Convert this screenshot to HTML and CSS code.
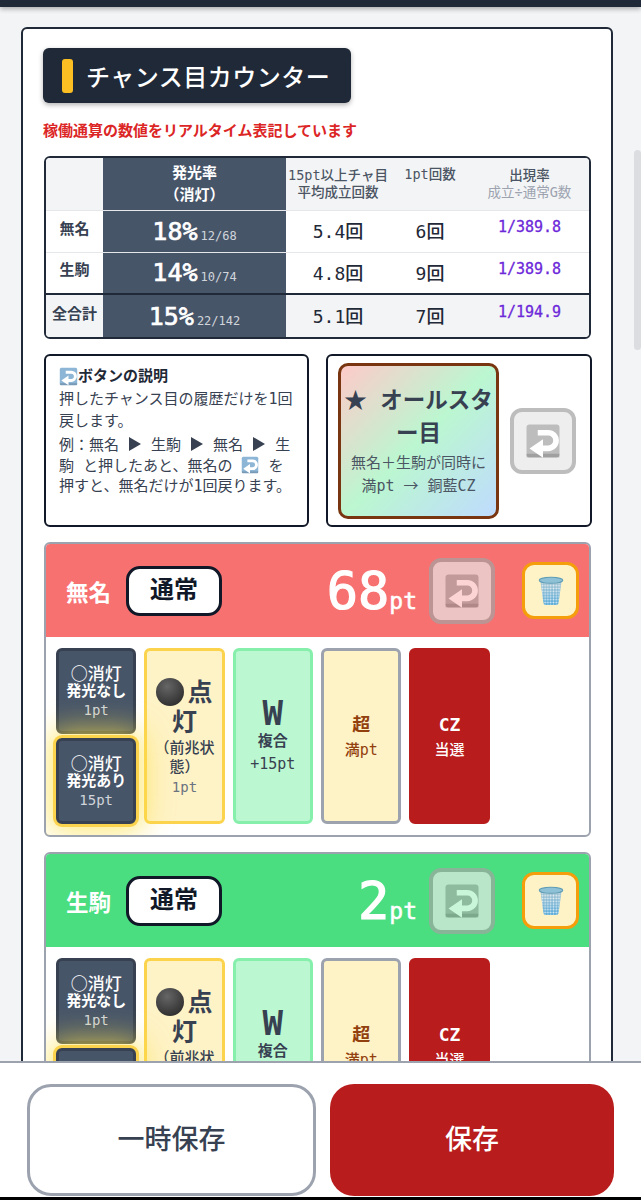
FILE: index.html
```html
<!DOCTYPE html>
<html lang="ja">

<head>
    <meta charset="UTF-8">
    <meta name="viewport" content="width=device-width, initial-scale=1.0">
    <title>チャンス目カウンター</title>
    <link rel="stylesheet" href="styles.css">
</head>

<body>
    <!-- icons used more than once -->
    <svg class="defs" width="0" height="0">
        <defs>
            <symbol id="icon-return" viewBox="0 0 24 24">
                <rect x="1" y="1" width="22" height="22" rx="2" fill="currentColor"/>
                <rect x="1" y="20.5" width="22" height="2.5" fill="#000" opacity=".15"/>
                <path d="M8.500 6.500h7a5.200 5.200 0 0 1 0 10.400H11" fill="none" stroke="#fff" stroke-width="3.800"/>
                <path d="M12 10.800v12.400l-9-6.200z" fill="#fff"/>
            </symbol>
            <pattern id="mesh" width="2.600" height="2.600" patternUnits="userSpaceOnUse">
                <circle cx="1.300" cy="1.300" r=".85" fill="#fff"/>
            </pattern>
            <linearGradient id="basket" x1="0" y1="0" x2="0" y2="1">
                <stop offset="0" stop-color="#a9c4cf"/>
                <stop offset="1" stop-color="#4fa6d6"/>
            </linearGradient>
            <symbol id="icon-trash" viewBox="0 0 24 28">
                <path d="M2 4l3 21.500a2 2 0 0 0 2 1.500h10a2 2 0 0 0 2-1.500L22 4z" fill="url(#basket)"/>
                <path d="M2 4l3 21.500a2 2 0 0 0 2 1.500h10a2 2 0 0 0 2-1.500L22 4z" fill="url(#mesh)" opacity=".8"/>
                <ellipse cx="12" cy="4" rx="11" ry="2.800" fill="#8fc1d6" stroke="#5f9db5" stroke-width="1"/>
            </symbol>
            <radialGradient id="ball" cx=".4" cy=".3" r=".8">
                <stop offset="0" stop-color="#666"/>
                <stop offset="1" stop-color="#2a2a2a"/>
            </radialGradient>
            <symbol id="icon-ball" viewBox="0 0 24 24">
                <circle cx="12" cy="12" r="12" fill="url(#ball)"/>
            </symbol>
        </defs>
    </svg>

    <div class="topbar"></div>
    <div class="scrollthumb"></div>

    <main class="card">
        <h1 class="title"><span class="title-mark"></span>チャンス目カウンター</h1>
        <p class="notice">稼働通算の数値をリアルタイム表記しています</p>

        <div class="stats-wrap">
            <table class="stats">
                <colgroup>
                    <col class="c-name">
                    <col class="c-rate">
                    <col class="c-avg">
                    <col class="c-one">
                    <col>
                </colgroup>
                <tr class="head">
                    <th></th>
                    <th class="dark big">発光率<br>（消灯）</th>
                    <th>15pt以上チャ目<br>平均成立回数</th>
                    <th class="top">1pt回数</th>
                    <th>出現率<br><span class="faint">成立÷通常G数</span></th>
                </tr>
                <tr>
                    <td class="name">無名</td>
                    <td class="dark"><b class="pct">18%</b><small>12/68</small></td>
                    <td class="num">5.4回</td>
                    <td class="num">6回</td>
                    <td class="odds">1/389.8</td>
                </tr>
                <tr>
                    <td class="name">生駒</td>
                    <td class="dark"><b class="pct">14%</b><small>10/74</small></td>
                    <td class="num">4.8回</td>
                    <td class="num">9回</td>
                    <td class="odds">1/389.8</td>
                </tr>
                <tr class="total">
                    <td class="name">全合計</td>
                    <td class="dark"><b class="pct">15%</b><small>22/142</small></td>
                    <td class="num">5.1回</td>
                    <td class="num">7回</td>
                    <td class="odds">1/194.9</td>
                </tr>
            </table>
        </div>

        <div class="info-row">
            <section class="box help">
                <h2><svg class="ico-title"><use href="#icon-return"/></svg>ボタンの説明</h2>
                <p>押したチャンス目の履歴だけを1回戻します。</p>
                <p class="example">例：無名 <i class="tri"></i> 生駒 <i class="tri"></i> 無名 <i class="tri"></i> 生駒 と押したあと、無名の <svg class="ico-inline"><use href="#icon-return"/></svg> を押すと、無名だけが1回戻ります。</p>
            </section>
            <section class="box allstar-box">
                <button class="allstar">
                    <strong><span class="cjk">★</span> オールスタ<br>ー目</strong>
                    <span class="allstar-sub">無名＋生駒が同時に<br>満pt <span class="cjk">→</span> 銅藍CZ</span>
                </button>
                <button class="undo"><svg><use href="#icon-return"/></svg></button>
            </section>
        </div>

        <section class="panel">
            <header class="panel-head red">
                <span class="who">無名</span>
                <span class="mode">通常</span>
                <span class="score">68<small>pt</small></span>
                <button class="undo faded"><svg><use href="#icon-return"/></svg></button>
                <button class="trash"><svg><use href="#icon-trash"/></svg></button>
            </header>
            <div class="chips">
                <div class="stack">
                    <button class="chip navy"><span class="cjk">○消灯</span><b>発光なし</b><em>1pt</em></button>
                    <button class="chip navy lit"><span class="cjk">○消灯</span><b>発光あり</b><em>15pt</em></button>
                </div>
                <button class="chip cream"><span class="bigtxt"><svg class="ball"><use href="#icon-ball"/></svg>点灯</span><span class="sub">（前兆状態）</span><em>1pt</em></button>
                <button class="chip mint"><span class="w">W</span><b>複合</b><em>+15pt</em></button>
                <button class="chip cream2"><span class="lg">超</span><b>満pt</b></button>
                <button class="chip crimson"><span class="lg">CZ</span><b>当選</b></button>
            </div>
        </section>

        <section class="panel">
            <header class="panel-head green">
                <span class="who">生駒</span>
                <span class="mode">通常</span>
                <span class="score">2<small>pt</small></span>
                <button class="undo faded"><svg><use href="#icon-return"/></svg></button>
                <button class="trash"><svg><use href="#icon-trash"/></svg></button>
            </header>
            <div class="chips">
                <div class="stack">
                    <button class="chip navy"><span class="cjk">○消灯</span><b>発光なし</b><em>1pt</em></button>
                    <button class="chip navy lit"><span class="cjk">○消灯</span><b>発光あり</b><em>15pt</em></button>
                </div>
                <button class="chip cream"><span class="bigtxt"><svg class="ball"><use href="#icon-ball"/></svg>点灯</span><span class="sub">（前兆状態）</span><em>1pt</em></button>
                <button class="chip mint"><span class="w">W</span><b>複合</b><em>+15pt</em></button>
                <button class="chip cream2"><span class="lg">超</span><b>満pt</b></button>
                <button class="chip crimson"><span class="lg">CZ</span><b>当選</b></button>
            </div>
        </section>
    </main>

    <footer class="savebar">
        <button class="save-temp">一時保存</button>
        <button class="save">保存</button>
    </footer>
</body>

</html>
```

FILE: styles.css
```css
* {
    box-sizing: border-box;
}

html,
body {
    height: 1200px;
    overflow: hidden;
}

body {
    margin: 0;
    padding: 27px 28px 0 21px;
    background: #f3f4f6;
    color: #374151;
    /* latin is monospaced in this app, japanese falls through to noto */
    font-family: "DejaVu Sans Mono", "Noto Sans CJK JP", monospace;
}

button {
    font-family: inherit;
    cursor: pointer;
    padding: 0;
}

.cjk {
    font-family: "Noto Sans CJK JP", sans-serif;
}

.defs {
    display: block;
    height: 0;
}

.topbar {
    position: fixed;
    top: 0;
    left: 0;
    right: 0;
    height: 7px;
    background: #1f2937;
    box-shadow: 0 2px 5px rgba(0, 0, 0, .3);
}

.scrollthumb {
    position: fixed;
    top: 150px;
    right: 0;
    width: 7px;
    height: 200px;
    border-radius: 4px;
    background: #dcdde0;
}

.card {
    background: #fff;
    border: 2px solid #1f2937;
    border-radius: 6px;
    padding: 19px 20px 20px;
    height: 1173px;
    overflow: hidden;
}

.title {
    display: inline-flex;
    align-items: center;
    gap: 13px;
    width: 308px;
    height: 55px;
    margin: 0;
    padding-left: 19px;
    background: #1f2937;
    border-radius: 6px;
    box-shadow: 0 2px 5px rgba(0, 0, 0, .3);
    color: #fff;
    font-size: 24px;
    font-weight: 500;
    letter-spacing: .5px;
    white-space: nowrap;
}

.title-mark {
    width: 11px;
    height: 34px;
    border-radius: 3px;
    background: #fbbf24;
}

.notice {
    margin: 16px 0 13px;
    color: #dc2626;
    font-size: 15px;
    font-weight: 700;
    line-height: 24px;
}

/* stats table */
.stats-wrap {
    margin-left: 1px;
    border: 2px solid #1f2937;
    border-radius: 6px;
    overflow: hidden;
}

.stats {
    width: 100%;
    height: 179px;
    border-collapse: collapse;
    table-layout: fixed;
    text-align: center;
}

.c-name {
    width: 57px;
}

.c-rate {
    width: 183px;
}

.c-avg {
    width: 104px;
}

.c-one {
    width: 80px;
}

.stats th {
    height: 52px;
    padding: 0;
    background: #f3f4f6;
    font-size: 13.500px;
    font-weight: 500;
    line-height: 17px;
    color: #4b5563;
}

.stats td {
    height: 42px;
    padding: 0;
    border-top: 1px solid #e5e7eb;
}

.stats .big {
    font-size: 15px;
    font-weight: 700;
    line-height: 22px;
    color: #fff;
}

.stats .top {
    vertical-align: top;
    padding-top: 8px;
}

.faint {
    color: #9ca3af;
    font-weight: 400;
}

.stats .dark {
    background: #475569;
    color: #fff;
    border-top-color: #e5e7eb;
}

.name {
    font-size: 15px;
    font-weight: 700;
    padding-bottom: 8px !important;
}

.pct {
    font-size: 25px;
    font-weight: 400;
    -webkit-text-stroke: .7px #fff;
}

.dark small {
    margin-left: 3px;
    font-size: 12px;
    color: #d1d5db;
}

.num {
    font-size: 18px;
    font-weight: 500;
    color: #1f2937;
    padding-bottom: 2px !important;
}

.odds {
    padding-bottom: 8px !important;
    font-size: 15px;
    color: #6d28d9;
    -webkit-text-stroke: .3px #6d28d9;
}

.stats .total td {
    height: 43px;
    border-top: 2px solid #1f2937;
    background: #f3f4f6;
}

.stats .total td.dark {
    background: #475569;
}

/* info boxes */
.info-row {
    display: grid;
    grid-template-columns: 265px 266px;
    gap: 17px;
    margin: 15px 0 15px 1px;
}

.box {
    height: 173px;
    border: 2px solid #111827;
    border-radius: 6px;
    background: #fff;
}

.help {
    padding: 8px 13px;
    font-size: 15px;
    line-height: 22px;
}

.help h2 {
    display: flex;
    align-items: center;
    margin: 0;
    font-size: 15px;
    font-weight: 700;
    line-height: 24px;
    color: #1f2937;
}

.help p {
    margin: 0;
}

.help .example {
    margin-top: 3px;
    line-height: 20.500px;
}

.ico-title {
    width: 19px;
    height: 19px;
    color: #8db6d6;
}

.ico-inline {
    width: 18px;
    height: 18px;
    vertical-align: -3px;
    color: #8db6d6;
}

.tri {
    display: inline-block;
    margin: 0 1px;
    border-left: 12px solid #374151;
    border-top: 7px solid transparent;
    border-bottom: 7px solid transparent;
    vertical-align: -1px;
}

.allstar-box {
    display: flex;
    align-items: center;
    gap: 11px;
    padding: 0 14px 0 10px;
}

.allstar {
    display: flex;
    flex-direction: column;
    align-items: center;
    width: 161px;
    height: 156px;
    padding: 16px 0 0;
    border: 3px solid #78350f;
    border-radius: 10px;
    background: linear-gradient(135deg, #fecaca, #bbf7d0 50%, #bfdbfe);
    color: #374151;
}

.allstar strong {
    font-size: 22.500px;
    line-height: 33px;
}

.allstar-sub {
    margin-top: 3px;
    font-size: 15px;
    line-height: 21px;
    color: #4b5563;
}

.undo {
    flex: none;
    width: 66px;
    height: 66px;
    border: 4px solid #bdbdbd;
    border-radius: 12px;
    background: #eee;
    color: #bdbdbd;
}

.undo svg {
    display: block;
    width: 36px;
    height: 36px;
    margin: auto;
}

.undo.faded {
    opacity: .7;
    background: #e8e8e8;
    border-color: #a3a3a3;
    color: #acacac;
}

/* player panels */
.panel {
    margin: 0 0 15px 1px;
    border: 2px solid #9ca3af;
    border-radius: 6px;
    background: #fff;
    height: 295px;
}

.panel-head {
    display: flex;
    align-items: center;
    height: 93px;
    padding: 0 10px 0 20px;
    color: #fff;
    border-radius: 4px 4px 0 0;
}

.red {
    background: #f87171;
}

.green {
    background: #4ade80;
}

.who {
    font-size: 22.500px;
    font-weight: 700;
}

.mode {
    width: 96px;
    height: 50px;
    margin-left: 15px;
    border: 3px solid #111827;
    border-radius: 14px;
    background: #fff;
    color: #111827;
    font-size: 24px;
    font-weight: 700;
    line-height: 42px;
    text-align: center;
}

.score {
    margin-left: auto;
    margin-right: 12px;
    font-size: 52px;
    font-weight: 500;
    line-height: 1;
    -webkit-text-stroke: 1.200px #fff;
}

.score small {
    font-size: 23px;
    -webkit-text-stroke: .5px #fff;
}

.trash {
    flex: none;
    width: 57px;
    height: 57px;
    margin-left: 27px;
    border: 3px solid #f59e0b;
    border-radius: 12px;
    background: #fef3c7;
}

.trash svg {
    display: block;
    width: 26px;
    height: 30px;
    margin: auto;
}

.chips {
    display: grid;
    grid-template-columns: repeat(6, 1fr);
    gap: 8px;
    height: 198px;
    padding: 11px 11px 11px 10px;
    overflow: hidden;
}

.stack {
    display: flex;
    flex-direction: column;
    gap: 4px;
}

.chip {
    display: flex;
    flex-direction: column;
    align-items: center;
    justify-content: center;
    min-width: 0;
    border: 3px solid transparent;
    border-radius: 6px;
    font-size: 15px;
    line-height: 19px;
}

.chip b {
    font-weight: 700;
}

.chip em {
    font-style: normal;
    font-size: 14px;
}

.navy {
    flex: 1;
    background: #475569;
    border-color: #374151;
    color: #fff;
    font-size: 17px;
    font-weight: 500;
}

.navy b {
    font-size: 15px;
}

.navy em {
    color: #d1d5db;
}

.lit {
    position: relative;
    z-index: 1;
    box-shadow: 0 0 0 3px #fcd34d, 0 0 30px 8px rgba(253, 224, 71, .75);
}

.cream {
    padding-top: 2px;
    background: #fef3c7;
    border-color: #fcd34d;
    color: #374151;
}

.bigtxt {
    font-size: 25px;
    font-weight: 700;
    line-height: 30px;
}

.ball {
    width: 28px;
    height: 28px;
    vertical-align: -5px;
    margin-right: 3px;
}

.sub {
    margin-top: 1px;
    font-weight: 500;
    line-height: 19px;
}

.cream em {
    color: #6b7280;
    margin-top: 1px;
}

.mint {
    padding-bottom: 4px;
    background: #bbf7d0;
    border-color: #86efac;
    color: #374151;
}

.w {
    font-size: 34px;
    font-weight: 700;
    line-height: 37px;
}

.mint em {
    margin-top: 4px;
    font-size: 15px;
}

.cream2 {
    background: #fef3c7;
    border-color: #9ca3af;
    color: #92400e;
}

.crimson {
    background: #b91c1c;
    border-color: #b91c1c;
    color: #fff;
}

.lg {
    font-size: 18px;
    font-weight: 700;
    line-height: 26px;
}

.cream2 b,
.crimson b {
    margin-top: 3px;
    font-weight: 500;
}

/* bottom bar */
.savebar {
    position: fixed;
    z-index: 2;
    left: 0;
    right: 0;
    bottom: 0;
    display: flex;
    gap: 14px;
    height: 139px;
    padding: 21px 27px 0;
    background: #fff;
    border-top: 2px solid #9ca3af;
    border-bottom: 3px solid #000;
}

.save-temp,
.save {
    height: 112px;
    padding-bottom: 6px;
    border-radius: 24px;
    font-size: 27px;
    font-weight: 500;
}

.save-temp {
    width: 289px;
    border: 3px solid #9ca3af;
    background: #fff;
    color: #374151;
}

.save {
    width: 284px;
    border: none;
    background: #b91c1c;
    color: #fff;
}
```
